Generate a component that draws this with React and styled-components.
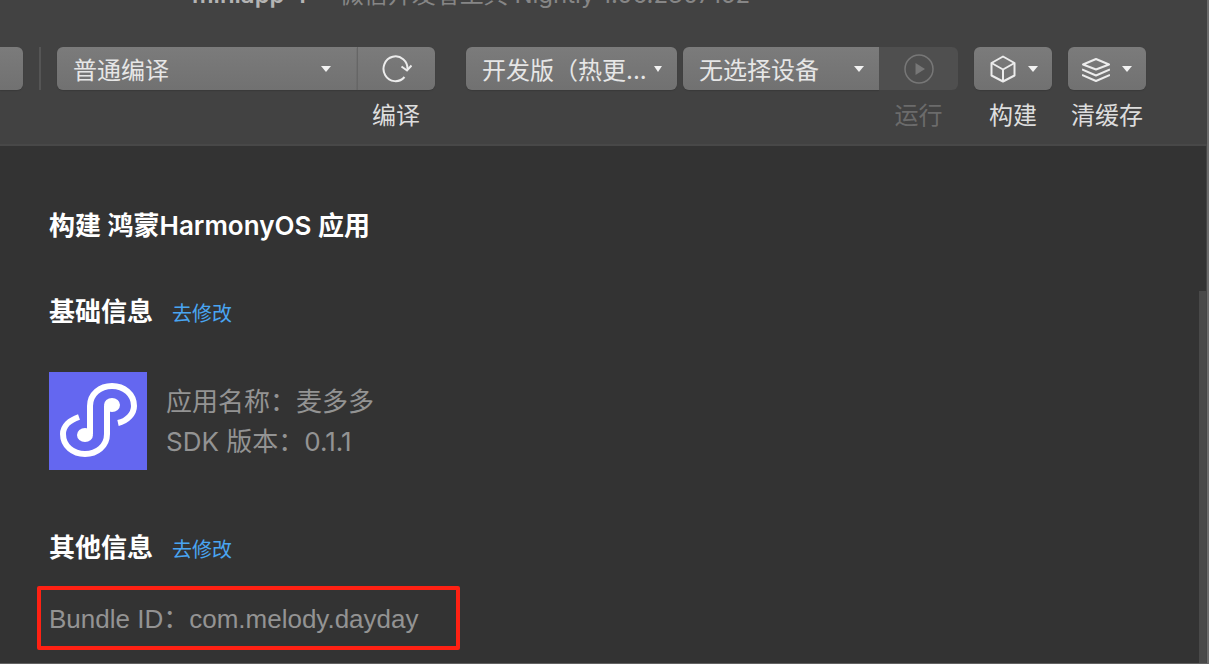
import React from 'react';
import styled, { createGlobalStyle } from 'styled-components';

const GlobalStyle = createGlobalStyle`
  * {
    box-sizing: border-box;
  }
  body {
    margin: 0;
    background: #333333;
    font-family: Inter, "Noto Sans CJK SC", sans-serif;
  }
  h1, h2, p {
    margin: 0;
  }
`;

const Window = styled.div`
  display: flex;
  flex-direction: column;
  min-height: 100vh;
  overflow: hidden;
  border-right: 2px solid #6c6c6c;
  border-bottom: 1px solid #626262;
`;

const TitleBar = styled.header`
  display: flex;
  gap: 16px;
  height: 47px;
  padding-left: 192px;
  background: #424242;
  font-size: 24px;
  line-height: 32px;
  white-space: nowrap;
`;

const TitleText = styled.span`
  margin-top: -21px;
  color: ${(props) => (props.$strong ? '#b4b4b4' : '#868686')};
  font-weight: ${(props) => (props.$strong ? 600 : 400)};
`;

const Toolbar = styled.div`
  display: flex;
  align-items: flex-start;
  height: 99px;
  padding-right: 61px;
  background: #424242;
  border-bottom: 2px solid #484848;
`;

const Separator = styled.div`
  width: 2px;
  height: 43px;
  margin: 0 16px;
  background: #555555;
`;

const ToolGroup = styled.div`
  display: flex;
  flex: ${(props) => (props.$grow ? 1 : 'none')};
  margin-right: ${(props) => props.$gap || 0}px;
`;

const Tool = styled.div`
  display: flex;
  flex-direction: column;
  align-items: center;
  flex: ${(props) => (props.$grow ? 1 : 'none')};
  width: ${(props) => (props.$width ? `${props.$width}px` : 'auto')};
`;

const corners = {
  all: '6px',
  left: '6px 0 0 6px',
  right: '0 6px 6px 0',
};

const ToolButton = styled.button`
  display: flex;
  align-items: center;
  justify-content: center;
  gap: 12px;
  width: 100%;
  height: 43px;
  padding: 0;
  border: 0;
  border-left: ${(props) => (props.$divided ? '1px solid #666666' : '0')};
  border-radius: ${(props) => corners[props.$round || 'all']};
  background: linear-gradient(#7b7b7b, #717171);
  box-shadow: 0 1px 1px #3a3a3a;
  color: #ececec;

  &:disabled {
    background: #4f4f4f;
    box-shadow: none;
    color: #777777;
  }
`;

const ToolLabel = styled.label`
  margin-top: 8px;
  color: ${(props) => (props.$muted ? '#6b6b6b' : '#dddddd')};
  font-size: 24px;
  line-height: 36px;
  white-space: nowrap;
`;

const SelectBox = styled.div`
  display: grid;
  align-items: center;
  width: 100%;
  height: 43px;
  border-radius: ${(props) => corners[props.$round || 'all']};
  background: linear-gradient(#7b7b7b, #717171);
  box-shadow: 0 1px 1px #3a3a3a;

  > * {
    grid-area: 1 / 1;
  }
`;

const Select = styled.select`
  width: 100%;
  height: 43px;
  padding: 3px 0 0 16px;
  border: 0;
  background: transparent;
  color: #e6e6e6;
  font-family: inherit;
  font-size: 24px;
  appearance: none;
`;

const Caret = styled.span`
  width: 0;
  border: solid transparent;
  border-width: ${(props) => (props.$small ? '6px 4px 0' : '6px 5px 0')};
  border-top-color: #f2f2f2;
`;

const SelectCaret = styled(Caret)`
  justify-self: end;
  margin-right: ${(props) => (props.$wide ? 26 : 15)}px;
  pointer-events: none;
`;

const Content = styled.main`
  position: relative;
  flex: 1;
  padding: 60px 49px 12px;
  background: #333333;
  border-right: 1px solid #454545;
`;

const PageTitle = styled.h1`
  color: #ffffff;
  font-size: 26px;
  font-weight: 600;
  line-height: 40px;
`;

const SectionHead = styled.div`
  display: flex;
  align-items: center;
  gap: 19px;
  margin-top: ${(props) => props.$space}px;
`;

const SectionTitle = styled.h2`
  color: #ffffff;
  font-size: 26px;
  font-weight: 600;
  line-height: 40px;
`;

const EditLink = styled.a`
  padding-top: 3px;
  color: #49a5f2;
  font-size: 20px;
  line-height: 30px;
  text-decoration: none;
`;

const AppInfo = styled.div`
  display: flex;
  align-items: center;
  gap: 19px;
  margin-top: 40px;
`;

const Logo = styled.svg`
  display: block;
  width: 98px;
  height: 98px;
  background: #6467f0;
`;

const InfoLine = styled.p`
  padding-top: 2px;
  color: #939393;
  font-size: 26px;
  line-height: 38px;
  white-space: nowrap;
`;

const BundleLine = styled(InfoLine)`
  font-family: "Liberation Sans", "Noto Sans CJK SC", sans-serif;
`;

const Highlight = styled.div`
  width: 423px;
  margin: 18px 0 0 -12px;
  padding: 8px;
  border: 4px solid #ff2113;
  border-radius: 2px;
`;

const ScrollThumb = styled.div`
  position: absolute;
  top: 145px;
  right: 0;
  bottom: 0;
  width: 7px;
  background: #494949;
`;

const EdgeMark = styled.div`
  position: absolute;
  top: 25px;
  right: -3px;
  width: 2px;
  height: 4px;
  background: #d8d8d8;
`;

const ReloadIcon = () => (
  <svg width="30" height="30" viewBox="0 0 30 30" fill="none" stroke="currentColor" strokeWidth="2">
    <path d="M22.5 23A12 12.4 0 1 1 25.5 15.5" />
    <path d="M19.5 12.5L25 16.5L29.5 11.5" />
  </svg>
);

const PlayIcon = () => (
  <svg width="30" height="30" viewBox="0 0 30 30" fill="none">
    <circle cx="15" cy="15" r="14" stroke="currentColor" strokeWidth="1.5" />
    <path d="M11.5 9L21 15L11.5 21Z" fill="currentColor" />
  </svg>
);

const CubeIcon = () => (
  <svg width="28" height="28" viewBox="0 0 28 28" fill="none" stroke="currentColor" strokeWidth="2" strokeLinejoin="round">
    <path d="M15 1.5L26.5 8V20.5L15 26.5L3.5 20.5V8Z" />
    <path d="M3.5 8L15 14.5L26.5 8M15 14.5V26.5" />
  </svg>
);

const LayersIcon = () => (
  <svg width="28" height="28" viewBox="0 0 28 28" fill="none" stroke="currentColor" strokeWidth="2" strokeLinejoin="round">
    <path d="M14 4L27 9.5L14 14.5L1 9.5Z" />
    <path d="M0 14.5L14 20.5L28 14.5" />
    <path d="M0 20L14 26L28 20" />
  </svg>
);

const App = () => {
  return (
    <>
      <GlobalStyle />
      <Window>
        <TitleBar>
          <TitleText $strong>miniapp-1</TitleText>
          <TitleText>- 微信开发者工具 Nightly 1.06.2307152</TitleText>
        </TitleBar>
        <Toolbar>
          <Tool $width={23}>
            <ToolButton $round="right" aria-label="更多" />
          </Tool>
          <Separator />
          <ToolGroup $grow $gap={31}>
            <Tool $grow>
              <SelectBox $round="left">
                <Select aria-label="编译模式">
                  <option>普通编译</option>
                </Select>
                <SelectCaret $wide />
              </SelectBox>
            </Tool>
            <Tool $width={78}>
              <ToolButton id="compile" $round="right" $divided>
                <ReloadIcon />
              </ToolButton>
              <ToolLabel htmlFor="compile">编译</ToolLabel>
            </Tool>
          </ToolGroup>
          <ToolGroup $gap={6}>
            <Tool $width={211}>
              <SelectBox>
                <Select aria-label="版本">
                  <option>开发版（热更...</option>
                </Select>
                <SelectCaret $small />
              </SelectBox>
            </Tool>
          </ToolGroup>
          <ToolGroup $gap={16}>
            <Tool $width={196}>
              <SelectBox $round="left">
                <Select aria-label="设备">
                  <option>无选择设备</option>
                </Select>
                <SelectCaret />
              </SelectBox>
            </Tool>
            <Tool $width={79}>
              <ToolButton id="run" $round="right" disabled>
                <PlayIcon />
              </ToolButton>
              <ToolLabel htmlFor="run" $muted>运行</ToolLabel>
            </Tool>
          </ToolGroup>
          <ToolGroup $gap={16}>
            <Tool $width={78}>
              <ToolButton id="build">
                <CubeIcon />
                <Caret />
              </ToolButton>
              <ToolLabel htmlFor="build">构建</ToolLabel>
            </Tool>
          </ToolGroup>
          <ToolGroup>
            <Tool $width={78}>
              <ToolButton id="clear">
                <LayersIcon />
                <Caret />
              </ToolButton>
              <ToolLabel htmlFor="clear">清缓存</ToolLabel>
            </Tool>
          </ToolGroup>
        </Toolbar>
        <Content>
          <PageTitle>构建 鸿蒙HarmonyOS 应用</PageTitle>
          <SectionHead $space={46}>
            <SectionTitle>基础信息</SectionTitle>
            <EditLink href="#base">去修改</EditLink>
          </SectionHead>
          <AppInfo>
            <Logo viewBox="0 0 98 98" fill="none" aria-label="小程序">
              <path
                d="M30 45C21 48 14 54 14 62C14 74 24 82 36 82C48 82 58 74 58 62V34"
                stroke="#ffffff"
                strokeWidth="6"
              />
              <path
                d="M69 51C78 49 85 42 85 34C85 22 75 14 63 14C51 14 41 22 41 34V62"
                stroke="#ffffff"
                strokeWidth="6"
              />
              <ellipse cx="63" cy="33" rx="8" ry="7" fill="#ffffff" />
              <ellipse cx="36" cy="63" rx="8" ry="7" fill="#ffffff" />
            </Logo>
            <div>
              <InfoLine>应用名称：麦多多</InfoLine>
              <InfoLine>SDK 版本：0.1.1</InfoLine>
            </div>
          </AppInfo>
          <SectionHead $space={58}>
            <SectionTitle>其他信息</SectionTitle>
            <EditLink href="#other">去修改</EditLink>
          </SectionHead>
          <Highlight>
            <BundleLine>Bundle ID：com.melody.dayday</BundleLine>
          </Highlight>
          <ScrollThumb />
          <EdgeMark />
        </Content>
      </Window>
    </>
  );
};

export default App;
